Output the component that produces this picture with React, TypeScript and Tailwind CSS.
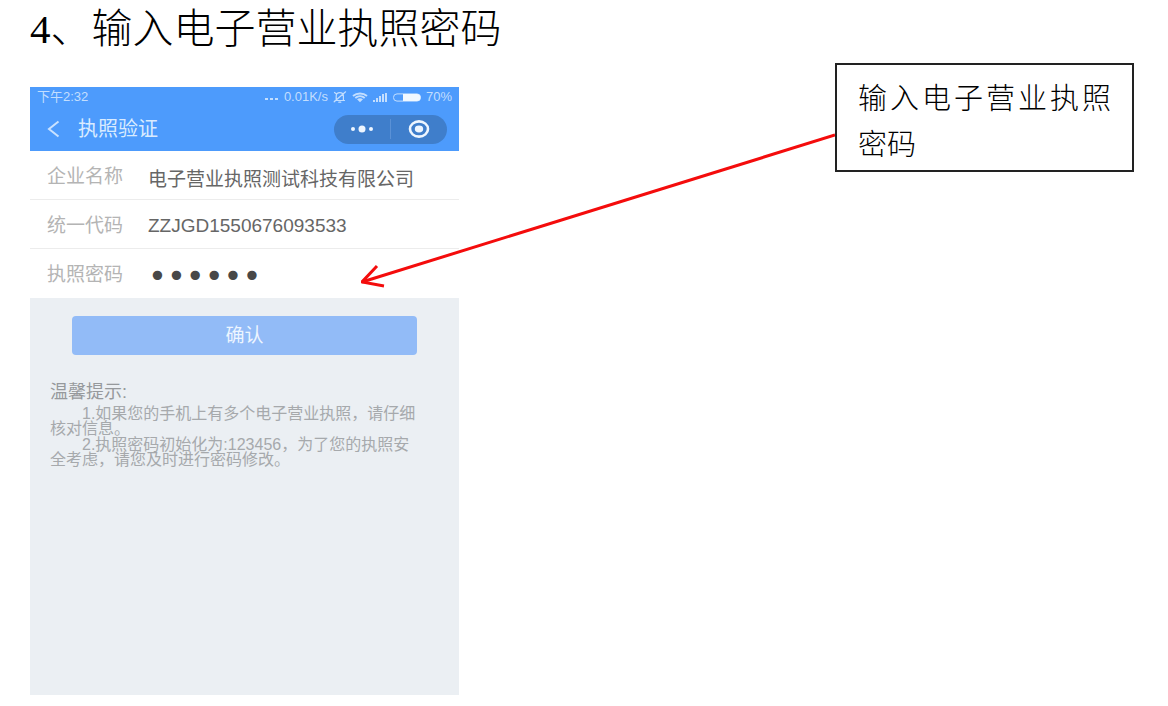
import type { ReactNode } from 'react';
import clsx from 'clsx';

const FIELDS = [
  { id: 'company', label: '企业名称', value: '电子营业执照测试科技有限公司', type: 'text' },
  { id: 'code', label: '统一代码', value: 'ZZJGD1550676093533', type: 'text' },
  { id: 'password', label: '执照密码', value: '123456', type: 'password' },
];

function StatusBar() {
  return (
    <div className="flex h-5 items-center justify-between px-[7px] text-[13px] leading-5 text-[#c3defe]">
      <span>下午2:32</span>
      <div className="flex items-center gap-[5px]">
        <svg width="14" height="10" viewBox="0 0 14 10" fill="currentColor" aria-hidden="true">
          <rect x="0" y="6" width="3" height="2" />
          <rect x="5" y="6" width="3" height="2" />
          <rect x="10" y="6" width="3" height="2" />
        </svg>
        <span>0.01K/s</span>
        <svg
          width="14"
          height="12"
          viewBox="0 0 14 12"
          fill="none"
          stroke="currentColor"
          strokeWidth="1.2"
          strokeLinecap="round"
          aria-hidden="true"
        >
          <path d="M2 9.5h9.5M3.2 9.3V5C3.2 2.8 4.8 1.6 6.800 1.600S10.400 2.800 10.400 5v4.300M5.800 11.200h2M12.600 0.800 1.200 10.800M1.500 1.500l2 1.500" />
        </svg>
        <svg width="16" height="11" viewBox="0 0 16 11" fill="none" stroke="currentColor" aria-hidden="true">
          <path d="M1 4C5 0.700 11 0.700 15 4" strokeWidth="2" />
          <path d="M3.300 6C6 3.800 10 3.800 12.700 6" strokeWidth="2" />
          <path d="M5 7.200C7 5.800 9 5.800 11 7.200L8 10.300Z" fill="currentColor" stroke="none" />
        </svg>
        <svg width="15" height="10" viewBox="0 0 15 10" fill="currentColor" aria-hidden="true">
          <rect x="0" y="8" width="2" height="2" />
          <rect x="3" y="6" width="2" height="4" />
          <rect x="6" y="4" width="2" height="6" />
          <rect x="9" y="2" width="2" height="8" />
          <rect x="12" y="1" width="2" height="9" />
        </svg>
        <svg width="28" height="9" viewBox="0 0 28 9" aria-hidden="true">
          <rect x="0.500" y="0.900" width="27" height="7.200" rx="3.500" fill="none" stroke="#c3defe" />
          <path d="M10 1h14a3.500 3.500 0 0 1 0 7H10Z" fill="#f1f8ff" />
        </svg>
        <span>70%</span>
      </div>
    </div>
  );
}

function NavBar() {
  return (
    <header className="flex h-11 items-center pr-3 pl-[17px]">
      <button type="button" aria-label="返回" className="text-[#c9e2ff]">
        <svg width="13" height="18" viewBox="0 0 13 18" fill="none" stroke="currentColor" strokeWidth="2">
          <path d="M11.500 1.500 2 9l9.500 7.500" />
        </svg>
      </button>
      <h2 className="ml-[18px] flex-1 text-[20px] leading-6 text-[#d9ebff]">执照验证</h2>
      <div className="flex h-[29px] w-[113px] items-center rounded-full bg-[#3f7ecb]">
        <button type="button" aria-label="更多" className="flex flex-1 justify-center">
          <svg width="24" height="8" viewBox="0 0 24 8" fill="#eef6ff">
            <circle cx="3" cy="4" r="2" />
            <circle cx="12" cy="4" r="3.500" />
            <circle cx="21" cy="4" r="2" />
          </svg>
        </button>
        <span className="h-5 w-px bg-[#5a91d6]" />
        <button type="button" aria-label="关闭" className="flex flex-1 justify-center">
          <svg width="22" height="20" viewBox="0 0 22 20">
            <ellipse cx="11" cy="10" rx="9" ry="7.600" fill="none" stroke="#eef6ff" strokeWidth="2.600" />
            <ellipse cx="11" cy="10" rx="4.200" ry="3.400" fill="#eef6ff" />
          </svg>
        </button>
      </div>
    </header>
  );
}

function Tip({ children }: { children: ReactNode }) {
  return <p className="mt-px indent-[2em] text-[16px] leading-[15px]">{children}</p>;
}

function Phone() {
  return (
    <section className="mt-6 min-h-[608px] w-[429px] shrink-0 bg-[#ebeff3] font-['Liberation_Sans','Noto_Sans_CJK_SC',sans-serif] font-normal">
      <div className="bg-[#4d9bfc]">
        <StatusBar />
        <NavBar />
      </div>
      <form>
        <div className="divide-y divide-[#ececec] bg-white">
          {FIELDS.map((field) => (
            <div key={field.id} className="flex h-[49px] items-center px-[17px] pt-1 text-[19px]">
              <label htmlFor={field.id} className="w-[101px] shrink-0 text-[#b4b4b4]">
                {field.label}
              </label>
              <input
                id={field.id}
                type={field.type}
                defaultValue={field.value}
                autoComplete="off"
                className={clsx(
                  'h-9 min-w-0 flex-1 bg-transparent outline-none',
                  field.type === 'password'
                    ? "font-['DejaVu_Sans',sans-serif] text-[32px] text-[#484848]"
                    : 'text-[#666]',
                )}
              />
            </div>
          ))}
        </div>
        <div className="px-[42px] pt-[18px]">
          <button
            type="button"
            className="h-[39px] w-full rounded bg-[#92bbf7] text-[19px] leading-6 text-[#edf5ff]"
          >
            确认
          </button>
        </div>
      </form>
      <div className="px-5 pt-6 text-[#a6a9ac]">
        <h3 className="text-[18px] leading-[26px] text-[#96999c]">温馨提示:</h3>
        <Tip>
          1.如果您的手机上有多个电子营业执照，请仔细
          <br />
          核对信息。
        </Tip>
        <Tip>
          2.执照密码初始化为:123456，为了您的执照安
          <br />
          全考虑，请您及时进行密码修改。
        </Tip>
      </div>
    </section>
  );
}

export default function App() {
  return (
    <main className="min-h-screen bg-white pr-[34px] pl-[30px] font-['Liberation_Serif','Noto_Sans_CJK_SC',serif] font-light text-black">
      <h1 className="mb-1 text-[41px] leading-[59px] whitespace-nowrap">
        <span className="font-normal">4</span>、输入电子营业执照密码
      </h1>
      <div className="flex items-start">
        <Phone />
        {/* arrow from the callout down to the password field */}
        <div className="relative min-w-0 flex-1">
          <svg
            className="absolute top-0 right-0 -left-[98px] h-[232px] w-[calc(100%+98px)]"
            fill="none"
            stroke="#f40c0c"
            strokeWidth="3"
            aria-hidden="true"
          >
            <line x1="1" y1="219" x2="100%" y2="72" />
            <path d="M16 203 1 219l22 4" />
          </svg>
        </div>
        <aside className="w-[299px] shrink-0 border-2 border-[#222] pt-[11px] pr-[21px] pb-[2px] pl-[21px]">
          <p className="text-justify text-[29px] leading-[46px]">输入电子营业执照密码</p>
        </aside>
      </div>
    </main>
  );
}
